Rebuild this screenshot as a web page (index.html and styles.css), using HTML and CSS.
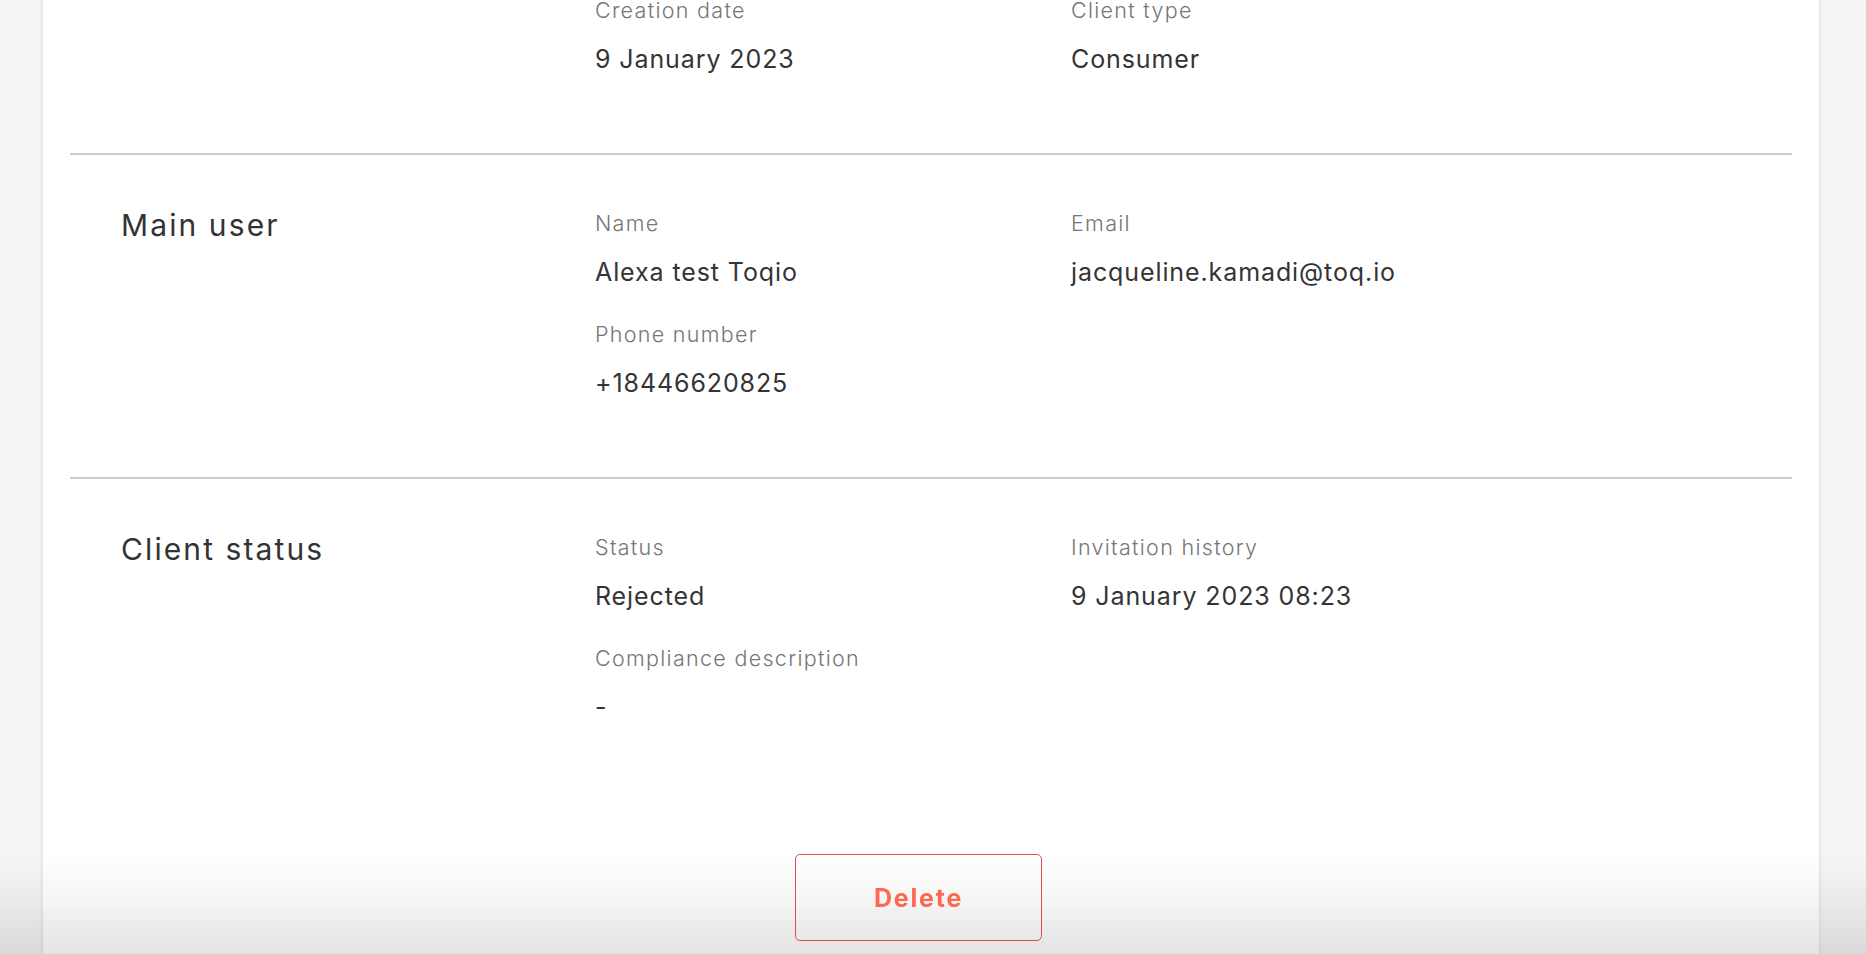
FILE: index.html
```html
<!DOCTYPE html>
<html lang="en">
<head>
<meta charset="utf-8">
<title>Client details</title>
<link rel="stylesheet" href="styles.css">
</head>
<body>
<div class="page">
  <main class="card">
    <section class="section section--continued">
      <div class="section-title"></div>
      <div class="fields">
        <div class="field">
          <div class="label">Creation date</div>
          <div class="value">9 January 2023</div>
        </div>
        <div class="field">
          <div class="label">Client type</div>
          <div class="value">Consumer</div>
        </div>
      </div>
    </section>
    <section class="section">
      <h2 class="section-title">Main user</h2>
      <div class="fields">
        <div class="field">
          <div class="label">Name</div>
          <div class="value">Alexa test Toqio</div>
        </div>
        <div class="field">
          <div class="label">Email</div>
          <div class="value">jacqueline.kamadi@toq.io</div>
        </div>
        <div class="field">
          <div class="label">Phone number</div>
          <div class="value">+18446620825</div>
        </div>
      </div>
    </section>
    <section class="section section--last">
      <h2 class="section-title">Client status</h2>
      <div class="fields">
        <div class="field">
          <div class="label">Status</div>
          <div class="value">Rejected</div>
        </div>
        <div class="field">
          <div class="label">Invitation history</div>
          <div class="value">9 January 2023 08:23</div>
        </div>
        <div class="field">
          <div class="label">Compliance description</div>
          <div class="value">-</div>
        </div>
      </div>
    </section>
  </main>
  <footer class="footer">
    <button class="btn-delete" type="button">Delete</button>
  </footer>
</div>
</body>
</html>
```
FILE: styles.css
```css
* { box-sizing: border-box; }

html, body {
  margin: 0;
  padding: 0;
  height: 100%;
}

body {
  background: #f5f5f5;
  font-family: Inter, "Open Sans", "DejaVu Sans", sans-serif;
  color: #333336;
  overflow: hidden;
}

.page {
  height: 100vh;
  overflow: hidden;
}

.card {
  margin: -6px 47px 0 43px;
  min-height: calc(100% + 6px);
  background: #ffffff;
  box-shadow: 0 0 5px rgba(0, 0, 0, 0.12);
  padding: 0 27px;
}

.section {
  display: grid;
  grid-template-columns: 474px 1fr;
  padding: 52px 0 80px 51px;
  border-bottom: 2px solid #cccccc;
}

.section--continued {
  padding-top: 0;
}

.section--last {
  border-bottom: none;
}

.section-title {
  margin: 0;
  font-size: 30px;
  line-height: 36px;
  font-weight: 400;
  color: #333336;
  letter-spacing: 2.1px;
}

.fields {
  margin-top: 4px;
  display: grid;
  grid-template-columns: 476px 1fr;
  row-gap: 36px;
  align-content: start;
}

.field {
  display: flex;
  flex-direction: column;
  gap: 23px;
}

.label {
  font-size: 21.5px;
  line-height: 24px;
  font-weight: 300;
  color: #767676;
  letter-spacing: 1.3px;
  white-space: nowrap;
}

.value {
  font-size: 25px;
  line-height: 28px;
  font-weight: 400;
  color: #343437;
  letter-spacing: 0.9px;
  white-space: nowrap;
}

.footer {
  position: fixed;
  left: 0;
  right: 0;
  bottom: 0;
  height: 114px;
  padding: 14px 72px 0 43px;
  display: flex;
  justify-content: center;
  align-items: flex-start;
  background: linear-gradient(to bottom, rgba(0, 0, 0, 0) 12%, rgba(0, 0, 0, 0.035) 50%, rgba(0, 0, 0, 0.11) 100%);
}

.btn-delete {
  width: 247px;
  height: 87px;
  border: 1px solid #e5484f;
  border-radius: 5px;
  background: transparent;
  font-family: Inter, "Open Sans", "DejaVu Sans", sans-serif;
  font-size: 25px;
  font-weight: 700;
  color: #fd684f;
  letter-spacing: 1.8px;
  cursor: pointer;
}
```
